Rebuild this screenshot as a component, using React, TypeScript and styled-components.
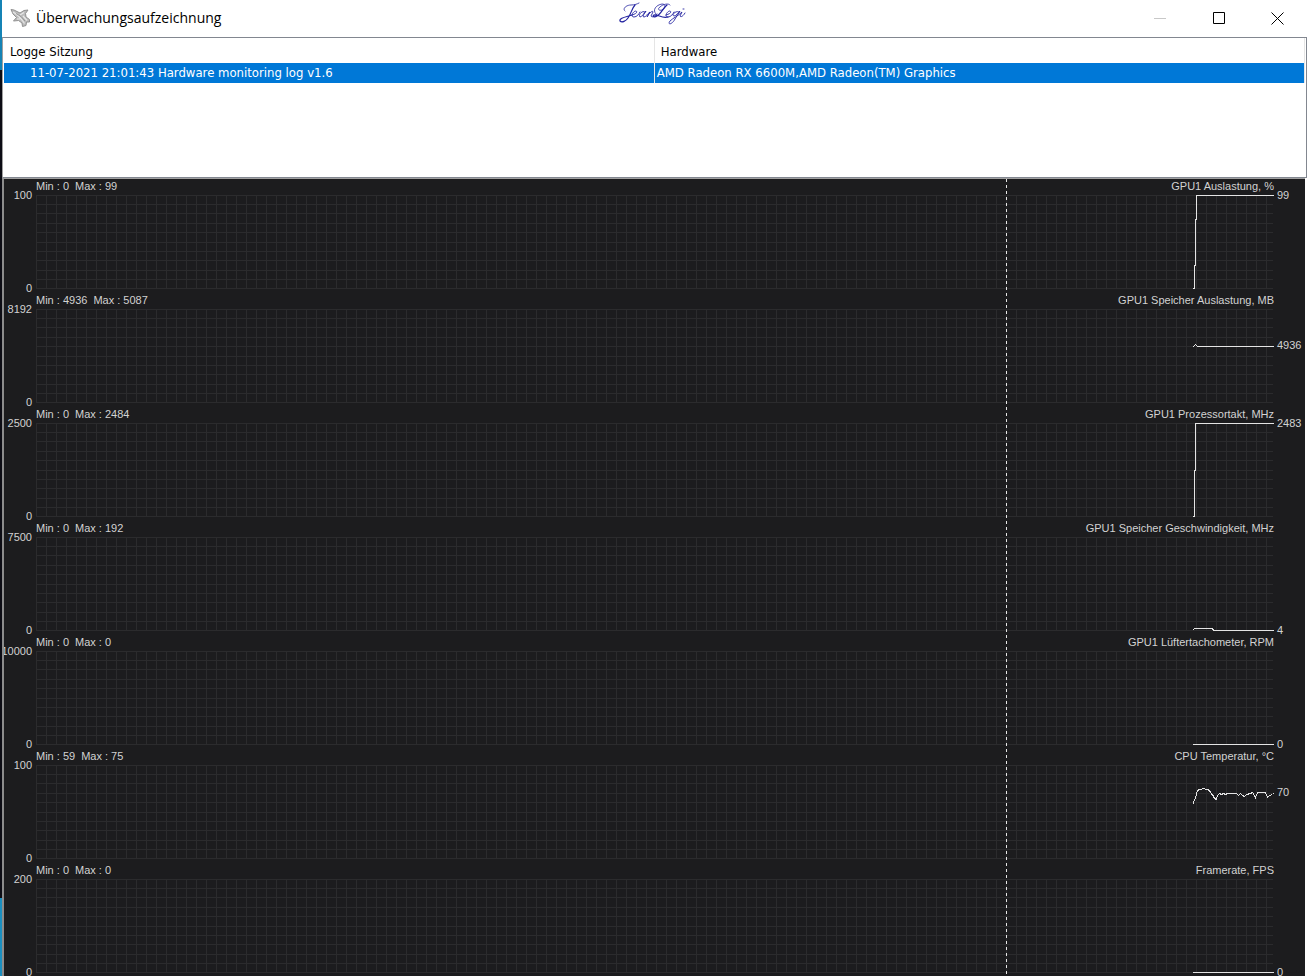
import React from 'react';
import styled, { createGlobalStyle } from 'styled-components';

const GlobalStyle = createGlobalStyle`
  *, *::before, *::after { box-sizing: border-box; }
  html, body, #root { height: 100%; }
  body { margin: 0; overflow: hidden; background: #fff; }
`;

const Desktop = styled.div`
  height: 100vh;
  padding-left: 2px;
  overflow: hidden;
  background: linear-gradient(#1583b5 0 70px, #0c0c14 70px 898px, #1b8fc0 898px);
`;

const AppWindow = styled.main`
  display: flex;
  flex-direction: column;
  height: 100%;
  background: #fff;
`;

const TitleBar = styled.header`
  display: grid;
  grid-template-columns: 1fr auto 1fr;
  flex: none;
  height: 37px;
`;

const TitleGroup = styled.div`
  display: flex;
  align-items: center;
  gap: 5px;
  height: 36px;
  padding-left: 8px;
`;

const Title = styled.h1`
  margin: 0;
  font: 400 14px/20px 'Open Sans', sans-serif;
  color: #000;
`;

const WindowButtons = styled.div`
  display: flex;
  justify-content: flex-end;
`;

const WindowButton = styled.button<{ $muted?: boolean }>`
  display: grid;
  place-items: center;
  width: 59px;
  height: 36px;
  padding: 0;
  border: 0;
  background: none;
  color: ${(p) => (p.$muted ? '#c8c8c8' : '#000')};
`;

const SessionPane = styled.section`
  flex: none;
  height: 141px;
  border: 1px solid #828790;
  border-left-color: #a0a0a0;
`;

const SessionTable = styled.table`
  width: calc(100% - 2px);
  margin-left: 1px;
  border-collapse: collapse;
  table-layout: fixed;
  font: 400 13px/20px 'DejaVu Sans Condensed', 'DejaVu Sans', sans-serif;
  letter-spacing: normal;
`;

const HeadCell = styled.th`
  height: 25px;
  padding: 2px 6px 0;
  border-right: 1px solid #e5e5e5;
  font-weight: 400;
  text-align: left;
  color: #000;
`;

const Cell = styled.td<{ $indent?: boolean }>`
  height: 20px;
  padding: 0 2px 0 ${(p) => (p.$indent ? 26 : 2)}px;
  border-right: 1px solid #e5e5e5;
  background: #0078d7;
  color: #fff;
`;

const ChartPane = styled.section`
  position: relative;
  flex: 1;
  min-height: 0;
  overflow: hidden;
  margin-right: 2px;
  padding-top: 1px;
  border-top: 1px solid #a0a0a0;
  border-left: 2px solid #8c8c8c;
  background: #1c1c1e;
  color: #d2d2d2;
  font: 400 11px/12px 'Liberation Sans', Arial, sans-serif;
`;

const ChartRow = styled.article`
  display: grid;
  grid-template-columns: 28px minmax(0, 1fr) 28px;
  grid-template-rows: 15px 99px;
  column-gap: 4px;
  height: 114px;
`;

const Caption = styled.div`
  display: flex;
  grid-column: 2;
  gap: 6px;
  white-space: nowrap;
`;

const ChartName = styled.h2`
  margin: 0 -1px 0 auto;
  font: inherit;
`;

const Scale = styled.div`
  display: flex;
  flex-direction: column;
  grid-column: 1;
  justify-content: space-between;
  align-items: flex-end;
  height: 105px;
  margin-top: -6px;
`;

const Plot = styled.div`
  height: 94px;
  background: repeating-linear-gradient(to right, #2b2b2d 0 1px, transparent 1px 10px);
`;

const Lines = styled.svg`
  display: block;
  width: 100%;
  height: 94px;
  overflow: visible;
`;

const Reading = styled.output<{ $top: number }>`
  padding-top: ${(p) => p.$top}px;
  margin-top: -6px;
`;

const TimeCursor = styled.div`
  position: absolute;
  top: 0;
  bottom: 0;
  right: 298px;
  width: 1px;
  background: repeating-linear-gradient(#e6e6e6 0 3px, transparent 3px 6px);
`;

const Signature = () => (
  <svg width="74" height="26" viewBox="0 0 74 26" role="img" aria-label="JeanLegi" fill="none" stroke="#2222a0" strokeLinecap="round">
    <path strokeWidth="0.8" d="M7 11C4 9 8 5 13 5C17 5 19 4 21 3" />
    <path strokeWidth="1.2" d="M17 5C14 8 13 14 10 18C8 21 4 23 2 21C1 18 8 17 14 15" />
    <path strokeWidth="0.9" d="M14 15C18 14 20 12 18 11C15 11 12 17 16 17C19 17 21 14 22 12M27 12C24 10 20 15 22 17C24 17 26 13 28 11C26 14 24 17 26 17C28 17 29 14 32 12L29 17C31 13 35 10 35 12L33 16C34 18 37 16 39 14" />
    <path strokeWidth="0.8" d="M38 14C34 10 38 5 44 4C48 4 48 8 44 10C41 11 39 9 42 7C45 4 51 3 52 5" />
    <path strokeWidth="1.2" d="M49 5C45 8 43 14 39 16C36 18 34 16 36 15C40 14 44 19 50 17" />
    <path strokeWidth="0.9" d="M48 15C52 14 54 12 52 11C49 11 46 17 50 17C53 17 55 14 56 12M61 12C58 10 53 15 56 16C58 16 60 13 62 11L57 19C54 25 49 25 52 21C55 18 60 16 64 12L62 16C63 18 66 15 67 13M65 9h1" />
  </svg>
);

const JetIcon = () => (
  <svg width="21" height="20" viewBox="0 0 21 20" aria-hidden="true" strokeLinejoin="round">
    <path d="M1 1.500L4 2L10 5L14 2.500L18 2L15.500 5.500L16 9L19.500 11.500L19.500 14L16.500 14L16 17.500L12.500 18.500L12 15L8.500 12.500L3.500 13L6.500 9.500L3 6Z" fill="#bcbcbc" stroke="#929292" />
    <path d="M3 4L8 7.500L12 12L14.500 15.500M10 7L14 4.500M13 8L17 12.500M7 11L10 11" fill="none" stroke="#e8e8e8" strokeWidth="1.2" />
    <path d="M6 5.500L11 8.500L15 13" fill="none" stroke="#8a8a8a" strokeWidth="0.8" />
  </svg>
);

type Chart = {
  name: string;
  min: number;
  max: number;
  top: number;
  value: number;
  level: number;
  trace: string;
};

// Trace coordinates count from the right end of the plot, one unit per pixel.
const charts: Chart[] = [
  { name: 'GPU1 Auslastung, %', min: 0, max: 99, top: 100, value: 99, level: 0, trace: '-81,93 -79,93 -79,70 -78,70 -78,24 -77,24 -77,0 0,0' },
  { name: 'GPU1 Speicher Auslastung, MB', min: 4936, max: 5087, top: 8192, value: 4936, level: 36, trace: '-81,37 -80,37 -78,35 -76,37 0,37' },
  { name: 'GPU1 Prozessortakt, MHz', min: 0, max: 2484, top: 2500, value: 2483, level: 0, trace: '-81,93 -79,93 -79,47 -78,47 -78,0 0,0' },
  { name: 'GPU1 Speicher Geschwindigkeit, MHz', min: 0, max: 192, top: 7500, value: 4, level: 93, trace: '-81,93 -79,91 -61,91 -60,93 0,93' },
  { name: 'GPU1 Lüftertachometer, RPM', min: 0, max: 0, top: 10000, value: 0, level: 93, trace: '-81,93 0,93' },
  { name: 'CPU Temperatur, °C', min: 59, max: 75, top: 100, value: 70, level: 27, trace: '-81,38 -80,38 -79,34 -78,33 -77,28 -76,25 -74,24 -72,24 -71,23 -69,23 -68,24 -65,24 -64,26 -63,26 -62,29 -61,29 -59,33 -57,34 -56,30 -54,28 -52,29 -50,28 -48,29 -46,28 -37,28 -35,30 -33,28 -31,30 -29,31 -27,29 -23,28 -21,27 -19,30 -18,32 -16,27 -8,27 -6,32 -4,30 -1,29 0,28' },
  { name: 'Framerate, FPS', min: 0, max: 0, top: 200, value: 0, level: 93, trace: '-81,93 0,93' },
];

const gridRows = [0, 9, 18, 28, 37, 47, 56, 65, 75, 84, 93];

const ChartView = ({ chart }: { chart: Chart }) => (
  <ChartRow>
    <Caption>
      <span>Min : {chart.min}</span>
      <span>Max : {chart.max}</span>
      <ChartName>{chart.name}</ChartName>
    </Caption>
    <Scale>
      <span>{chart.top}</span>
      <span>0</span>
    </Scale>
    <Plot>
      <Lines aria-hidden="true" shapeRendering="crispEdges">
        {gridRows.map((y) => (
          <rect key={y} width="100%" height="1" y={y} fill="#2b2b2d" />
        ))}
        <svg x="100%" overflow="visible">
          <polyline points={chart.trace} transform="translate(.5 .5)" fill="none" stroke="#e4e4e4" />
        </svg>
      </Lines>
    </Plot>
    <Reading $top={chart.level}>{chart.value}</Reading>
  </ChartRow>
);

export default function App() {
  return (
    <Desktop>
      <GlobalStyle />
      <AppWindow>
        <TitleBar>
          <TitleGroup>
            <JetIcon />
            <Title>Überwachungsaufzeichnung</Title>
          </TitleGroup>
          <Signature />
          <WindowButtons>
            <WindowButton $muted aria-label="Minimieren">
              <svg width="13" height="13"><path d="M1 6.500h12" stroke="currentColor" /></svg>
            </WindowButton>
            <WindowButton aria-label="Maximieren">
              <svg width="13" height="13"><path d="M1.500 .500h11v11h-11z" fill="none" stroke="currentColor" /></svg>
            </WindowButton>
            <WindowButton aria-label="Schließen">
              <svg width="13" height="13"><path d="M.500 .500l12 12M12.500 .500l-12 12" stroke="currentColor" /></svg>
            </WindowButton>
          </WindowButtons>
        </TitleBar>
        <SessionPane>
          <SessionTable>
            <thead>
              <tr>
                <HeadCell scope="col">Logge Sitzung</HeadCell>
                <HeadCell scope="col">Hardware</HeadCell>
              </tr>
            </thead>
            <tbody>
              <tr>
                <Cell $indent>11-07-2021 21:01:43 Hardware monitoring log v1.6</Cell>
                <Cell>AMD Radeon RX 6600M,AMD Radeon(TM) Graphics</Cell>
              </tr>
            </tbody>
          </SessionTable>
        </SessionPane>
        <ChartPane>
          {charts.map((chart) => (
            <ChartView key={chart.name} chart={chart} />
          ))}
          <TimeCursor />
        </ChartPane>
      </AppWindow>
    </Desktop>
  );
}
